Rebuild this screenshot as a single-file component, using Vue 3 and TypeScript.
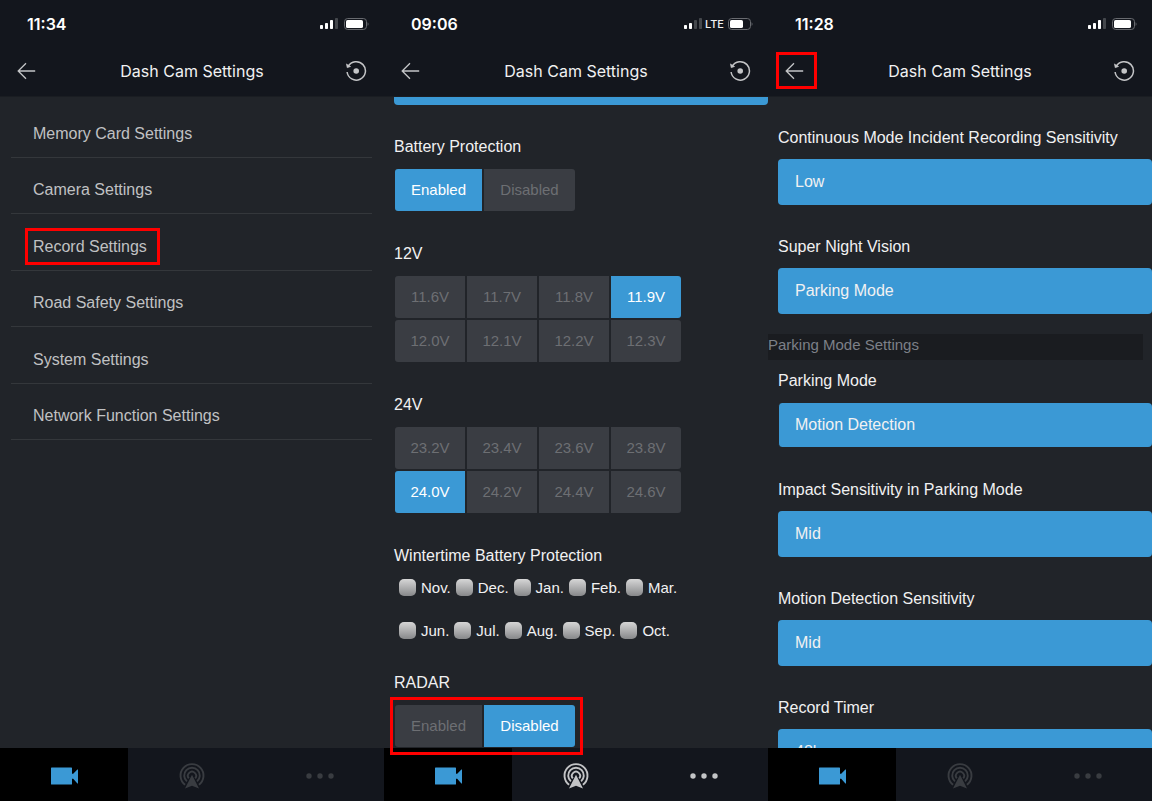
<script setup lang="ts">
import { reactive, ref } from 'vue'

interface Phone {
  id: string
  time: string
  bars: number
  network: string
  charge: number
  backMarked: boolean
  brightTabs: boolean
}

interface Choice {
  id: string
  label: string
  value: string
  options: string[]
  compact?: boolean
}

const phones: Phone[] = [
  { id: 'menu', time: '11:34', bars: 3, network: '', charge: 17, backMarked: false, brightTabs: false },
  { id: 'power', time: '09:06', bars: 2, network: 'LTE', charge: 13, backMarked: false, brightTabs: true },
  { id: 'record', time: '11:28', bars: 3, network: '', charge: 17, backMarked: true, brightTabs: false },
]

const menu = [
  'Memory Card Settings',
  'Camera Settings',
  'Record Settings',
  'Road Safety Settings',
  'System Settings',
  'Network Function Settings',
]

const signal = [
  { x: 0, y: 7, h: 4 },
  { x: 5, y: 5, h: 6 },
  { x: 10, y: 2, h: 9 },
  { x: 15, y: 0, h: 11 },
]

const states = ['Enabled', 'Disabled']
const protection = ref('Enabled')
const radar = ref('Disabled')

const voltages = reactive([
  {
    label: '12V',
    value: '11.9V',
    options: ['11.6V', '11.7V', '11.8V', '11.9V', '12.0V', '12.1V', '12.2V', '12.3V'],
  },
  {
    label: '24V',
    value: '24.0V',
    options: ['23.2V', '23.4V', '23.6V', '23.8V', '24.0V', '24.2V', '24.4V', '24.6V'],
  },
])

const months = [
  ['Nov.', 'Dec.', 'Jan.', 'Feb.', 'Mar.'],
  ['Jun.', 'Jul.', 'Aug.', 'Sep.', 'Oct.'],
]
const winter = ref<string[]>([])

const levels = ['Low', 'Mid', 'High']
const general = reactive<Choice[]>([
  { id: 'incident', label: 'Continuous Mode Incident Recording Sensitivity', value: 'Low', options: levels },
  { id: 'night', label: 'Super Night Vision', value: 'Parking Mode', options: ['Parking Mode'] },
])
const parking = reactive<Choice[]>([
  { id: 'mode', label: 'Parking Mode', value: 'Motion Detection', options: ['Motion Detection'], compact: true },
  { id: 'impact', label: 'Impact Sensitivity in Parking Mode', value: 'Mid', options: levels },
  { id: 'motion', label: 'Motion Detection Sensitivity', value: 'Mid', options: levels },
  { id: 'timer', label: 'Record Timer', value: '48h', options: ['48h'] },
])
</script>

<template>
  <main class="screens">
    <section v-for="phone in phones" :key="phone.id" class="phone">
      <header class="top">
        <div class="status">
          <span class="time">{{ phone.time }}</span>
          <div class="indicators">
            <svg class="signal" width="18" height="12" viewBox="0 0 18 12" aria-hidden="true">
              <rect
                v-for="(bar, i) in signal"
                :key="bar.x"
                :x="bar.x"
                :y="bar.y"
                width="3"
                :height="bar.h"
                rx="0.8"
                :fill="i < phone.bars ? '#ffffff' : '#44474c'"
              />
            </svg>
            <span v-if="phone.network" class="network">{{ phone.network }}</span>
            <svg class="battery" width="25" height="12" viewBox="0 0 25 12" aria-hidden="true">
              <rect x="0.5" y="0.5" width="22" height="11" rx="3.2" fill="none" stroke="#686a6f" />
              <rect x="2" y="2" :width="phone.charge" height="8" rx="1.6" fill="#ffffff" />
              <path d="M23.6 4.2c1.2.5 1.2 3.1 0 3.6z" fill="#686a6f" />
            </svg>
          </div>
        </div>
        <div class="nav">
          <button class="icon-button back" type="button" aria-label="Back">
            <svg width="19" height="18" viewBox="0 0 19 18" fill="none" stroke="#c4c5c7" stroke-width="1.3">
              <path d="M18.2 9H1.4M9 1.2 1.2 9 9 16.8" />
            </svg>
            <span v-if="phone.backMarked" class="mark mark-back"></span>
          </button>
          <h1 class="title">Dash Cam Settings</h1>
          <button class="icon-button" type="button" aria-label="Reset">
            <svg width="22" height="22" viewBox="0 0 22 22" fill="none" stroke="#c4c5c7" stroke-width="1.5">
              <path d="M3.2 6.4A9.2 9.2 0 1 1 2.1 12" />
              <path d="M1.4 3.900 2.200 7.700 5.600 6.500z" fill="#c4c5c7" stroke-width="0.6" />
              <circle cx="11.2" cy="11" r="2.8" fill="#c4c5c7" stroke="none" />
            </svg>
          </button>
        </div>
      </header>

      <nav v-if="phone.id === 'menu'" class="body">
        <ul class="menu">
          <li v-for="item in menu" :key="item">
            <a href="#">
              <span class="menu-text">
                {{ item }}<span v-if="item === 'Record Settings'" class="mark mark-item"></span>
              </span>
            </a>
          </li>
        </ul>
      </nav>

      <div v-else-if="phone.id === 'power'" class="body power">
        <div class="scrolled-field"></div>
        <div class="group">
          <h2>Battery Protection</h2>
          <div class="pair">
            <button
              v-for="s in states"
              :key="s"
              type="button"
              class="segment"
              :class="{ on: protection === s }"
              :aria-pressed="protection === s"
              @click="protection = s"
            >{{ s }}</button>
          </div>
        </div>
        <div v-for="v in voltages" :key="v.label" class="group">
          <h2>{{ v.label }}</h2>
          <div class="volts">
            <button
              v-for="o in v.options"
              :key="o"
              type="button"
              class="segment"
              :class="{ on: v.value === o }"
              :aria-pressed="v.value === o"
              @click="v.value = o"
            >{{ o }}</button>
          </div>
        </div>
        <div class="group">
          <h2>Wintertime Battery Protection</h2>
          <div class="months">
            <div v-for="(row, r) in months" :key="r" class="month-row">
              <label v-for="m in row" :key="m">
                <input v-model="winter" type="checkbox" :value="m" />{{ m }}
              </label>
            </div>
          </div>
        </div>
        <div class="group">
          <h2>RADAR</h2>
          <div class="pair">
            <button
              v-for="s in states"
              :key="s"
              type="button"
              class="segment"
              :class="{ on: radar === s }"
              :aria-pressed="radar === s"
              @click="radar = s"
            >{{ s }}</button>
            <span class="mark mark-pair"></span>
          </div>
        </div>
      </div>

      <div v-else class="body record">
        <div class="fields">
          <div v-for="c in general" :key="c.id" class="field">
            <label :for="c.id">{{ c.label }}</label>
            <select :id="c.id" v-model="c.value">
              <option v-for="o in c.options" :key="o">{{ o }}</option>
            </select>
          </div>
        </div>
        <h2 class="band">Parking Mode Settings</h2>
        <div class="fields">
          <div v-for="c in parking" :key="c.id" class="field" :class="{ compact: c.compact }">
            <label :for="c.id">{{ c.label }}</label>
            <select :id="c.id" v-model="c.value">
              <option v-for="o in c.options" :key="o">{{ o }}</option>
            </select>
          </div>
        </div>
      </div>

      <footer class="tabs" :class="{ bright: phone.brightTabs }">
        <button type="button" class="tab active" aria-label="Camera">
          <svg width="27" height="18" viewBox="0 0 27 18" fill="currentColor">
            <path d="M.6.5h19.800a.6.6 0 0 1 .6.6V6.800h1.200L26.400 2.500h.6v14h-.6L22.200 11.800H21v5.100a.6.6 0 0 1-.6.6H.6a.6.6 0 0 1-.6-.6V1.100A.6.6 0 0 1 .6.500z" />
          </svg>
        </button>
        <button type="button" class="tab" aria-label="Live">
          <svg width="26" height="26" viewBox="0 0 26 26" fill="none" stroke="currentColor" stroke-width="1.9">
            <path d="M6.100 21.800A11.500 11.500 0 1 1 19.900 21.800" />
            <path d="M7.900 18.400A7.800 7.800 0 1 1 18.100 18.400" />
            <path d="M9.800 15.400A4.100 4.100 0 1 1 16.200 15.400" />
            <path d="M13 11.800 20 25.600 13 22.800 6 25.600z" fill="currentColor" stroke="none" />
          </svg>
        </button>
        <button type="button" class="tab" aria-label="More">
          <svg width="28" height="6" viewBox="0 0 28 6" fill="currentColor">
            <circle cx="3" cy="3" r="2.700" />
            <circle cx="14" cy="3" r="2.700" />
            <circle cx="25" cy="3" r="2.700" />
          </svg>
        </button>
      </footer>
    </section>
  </main>
</template>

<style>
body {
  margin: 0;
  background: #212429;
}
</style>

<style scoped>
.screens {
  display: grid;
  grid-template-columns: repeat(3, minmax(0, 1fr));
  height: 100vh;
  overflow: hidden;
  font: 16px/20px "Liberation Sans", Arial, sans-serif;
  color: #f1f1f2;
}

button,
select {
  margin: 0;
  border: 0;
  font: inherit;
  color: inherit;
}

h1,
h2 {
  margin: 0;
  font-size: inherit;
  font-weight: 400;
}

.phone {
  display: flex;
  flex-direction: column;
  min-height: 0;
  background: #212429;
}

.top {
  flex: none;
  padding-bottom: 2px;
  background: #13161d;
  border-bottom: 1px solid #1a1d22;
}

.status {
  display: flex;
  align-items: center;
  justify-content: space-between;
  height: 48px;
  padding: 0 15px 0 27px;
}

.time {
  font: 600 16px/20px Inter, sans-serif;
  color: #ffffff;
}

.indicators {
  display: flex;
  align-items: center;
}

.battery {
  margin-left: 6px;
}

.network {
  margin-left: 3px;
  font: 500 11px/16px Inter, sans-serif;
}

.network + .battery {
  margin-left: 4px;
}

.nav {
  display: flex;
  align-items: center;
  justify-content: space-between;
  height: 46px;
  padding: 0 17px;
}

.icon-button {
  position: relative;
  display: flex;
  width: 22px;
  padding: 0;
  background: none;
}

.title {
  font: 400 16px/20px Inter, sans-serif;
}

.mark {
  position: absolute;
  z-index: 2;
  border: 3px solid #ff0000;
  pointer-events: none;
}

.mark-back {
  inset: -10px -10px -9px -9px;
}

.mark-item {
  inset: -8px -13px -8px -8px;
}

.mark-pair {
  inset: -8px -8px -8px -5px;
}

.body {
  flex: 1;
  min-height: 0;
}

.menu {
  display: grid;
  grid-auto-rows: 1fr;
  min-height: 339px;
  margin: 4px 12px 0 11px;
  padding: 0;
  list-style: none;
}

.menu li {
  display: grid;
  border-bottom: 1px solid #34373b;
}

.menu a {
  display: flex;
  align-items: center;
  padding: 9px 22px 0;
  color: #c0c1c3;
  text-decoration: none;
}

.menu-text {
  position: relative;
  line-height: 21px;
}

.power {
  display: flex;
  flex-direction: column;
  gap: 33px;
  padding-left: 10px;
}

.scrolled-field {
  flex: none;
  height: 8px;
  margin-bottom: -1px;
  background: #3b99d5;
  border-radius: 0 0 4px 4px;
}

.group {
  display: grid;
  gap: 12px;
}

.pair,
.volts {
  position: relative;
  display: grid;
  gap: 2px;
  justify-self: start;
  margin-left: 1px;
  font-size: 15px;
}

.pair {
  grid-template-columns: 87px 91px;
}

.volts {
  grid-template-columns: repeat(4, 70px);
}

.segment {
  height: 42px;
  padding: 0;
  background: #3a3d43;
  color: #6d6f73;
}

.segment.on {
  background: #3b99d5;
  color: #ffffff;
}

.pair .segment:first-child,
.volts .segment:nth-child(4n + 1) {
  border-radius: 3px 0 0 3px;
}

.pair .segment:nth-child(2),
.volts .segment:nth-child(4n) {
  border-radius: 0 3px 3px 0;
}

.months {
  display: grid;
  gap: 24px;
  padding-left: 5px;
  font-size: 15px;
}

.month-row {
  display: flex;
  gap: 5px;
  line-height: 19px;
}

.month-row label {
  display: flex;
  align-items: center;
  gap: 5px;
}

.month-row input {
  appearance: none;
  width: 17px;
  height: 17px;
  margin: 0;
  border-radius: 5px;
  background: linear-gradient(#d6d6d6, #87888a);
}

.month-row input:checked {
  background: #3b99d5;
}

.record {
  overflow: hidden;
  padding-top: 31px;
}

.fields {
  display: grid;
  gap: 32px;
  padding-left: 10px;
}

.field {
  display: grid;
  gap: 11px;
}

.field select {
  appearance: none;
  width: 100%;
  height: 46px;
  padding: 0 17px;
  border-radius: 4px;
  background: #3b99d5;
}

.compact {
  gap: 12px;
  margin-bottom: 1px;
}

.compact select {
  height: 44px;
  border-left: 1px solid #212429;
  padding-left: 16px;
}

.band {
  margin: 20px 9px 11px 0;
  padding-bottom: 4px;
  background: #1a1c20;
  color: #7d8088;
  font-size: 15px;
  line-height: 22px;
}

.tabs {
  display: grid;
  flex: none;
  grid-template-columns: repeat(3, 1fr);
  height: 53px;
  background: #13161d;
  color: #393c41;
}

.tabs.bright {
  color: #c3c4c6;
}

.tab {
  display: flex;
  align-items: center;
  justify-content: center;
  padding: 2px 0 0;
  background: none;
}

.tab.active {
  background: #000000;
  color: #3b99d5;
}
</style>
